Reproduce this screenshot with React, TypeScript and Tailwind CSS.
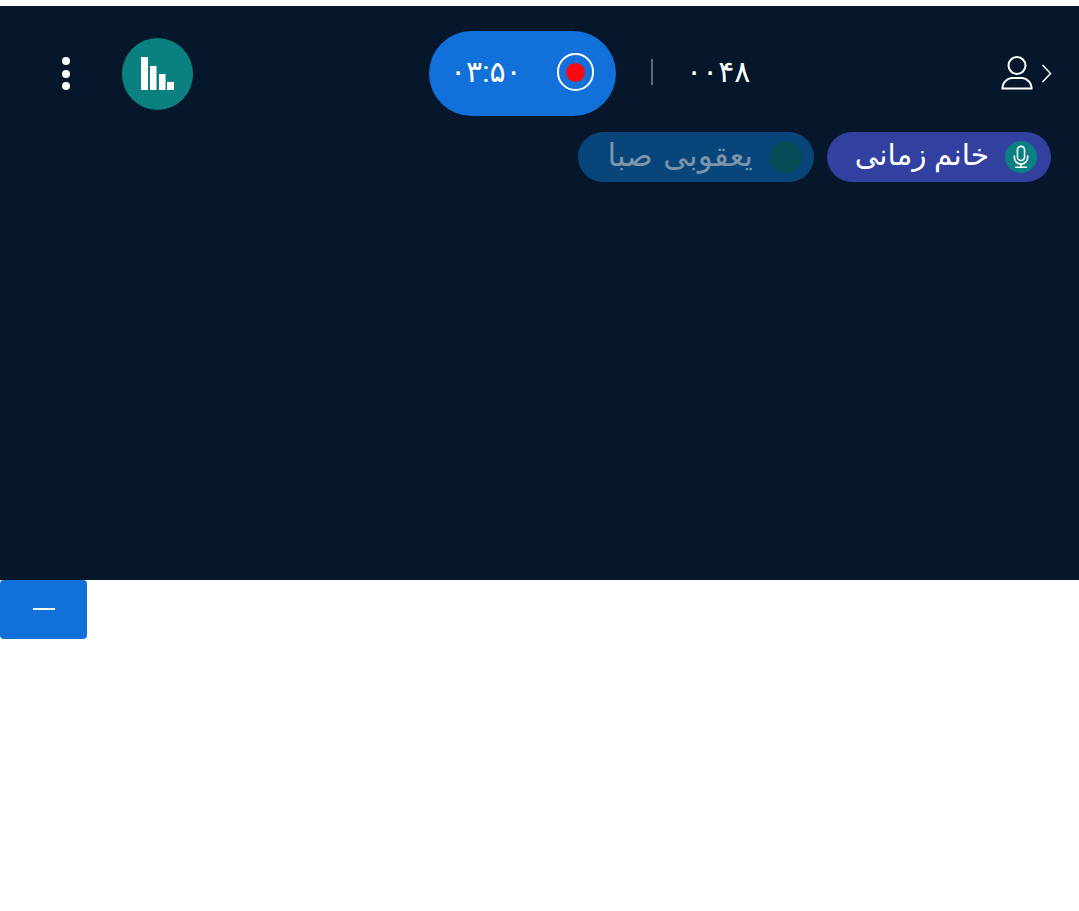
export default function App() {
  const font = "font-['Roboto','DejaVu_Sans',sans-serif]";
  return (
    <div className={`min-h-[911px] bg-white pt-[6px] ${font}`}>
      <div className="h-[574px] bg-[#06172b] pt-[25px]">
        <div className="flex h-[85px] items-center pl-[60px] pr-[27px]">
          <div className="flex w-[12px] flex-col items-center gap-[4.500px]">
            <span className="h-[8px] w-[8px] rounded-full bg-white" />
            <span className="h-[8px] w-[8px] rounded-full bg-white" />
            <span className="h-[8px] w-[8px] rounded-full bg-white" />
          </div>
          <div className="ml-[50px] flex h-[72px] w-[71px] items-center justify-center rounded-full bg-[#0b8080]">
            <svg width="34" height="33" viewBox="0 0 34 33" fill="#fff">
              <rect x="0" y="0" width="7" height="33" />
              <rect x="9" y="9" width="6.500" height="24" />
              <rect x="18" y="17" width="6.500" height="16" />
              <rect x="26" y="25" width="7" height="8" />
            </svg>
          </div>
          <div className="ml-[236px] flex h-[85px] w-[187px] items-center justify-between rounded-full bg-[#1270da] pl-[21px] pr-[22px]">
            <span className="mb-[4px] text-[30px] leading-none tracking-[5.500px] text-white">۰۳:۵۰</span>
            <span className="mb-[3px] flex h-[38px] w-[37px] items-center justify-center rounded-full border-2 border-white">
              <span className="h-[19px] w-[19px] rounded-full bg-[#f80a14]" />
            </span>
          </div>
          <div className="mb-[3px] ml-[35px] h-[26px] w-[2px] bg-[#5d6878]" />
          <span className="mb-[4px] ml-[33px] text-[30px] leading-none tracking-[4.500px] text-white">۰۰۴۸</span>
          <div className="ml-auto flex items-center gap-[8px]">
            <svg className="mb-[2px]" width="32" height="34" viewBox="0 0 32 34" fill="none" stroke="#fff" strokeWidth="2">
              <circle cx="16" cy="9.500" r="8.500" />
              <path d="M1.500 32.500v-1.500c0-4.500 5-8.500 9-9h11c4 .5 9 4.500 9 9v1.500z" />
            </svg>
            <svg width="11" height="19" viewBox="0 0 11 19" fill="none" stroke="#fff" strokeWidth="1.500">
              <path d="M1.500 1l8 8.500-8 8.500" />
            </svg>
          </div>
        </div>
        <div className="mt-[16px] flex justify-end gap-[13px] pr-[28px]">
          <div className="flex h-[50px] w-[236px] flex-row-reverse items-center rounded-full bg-[#07457a] pr-[12px]">
            <span className="h-[32px] w-[32px] shrink-0 rounded-full bg-[#064b56]" />
            <span className="mb-[3px] mr-[17px] text-[31px] leading-none whitespace-nowrap text-[#7e95a9] [word-spacing:3px]" dir="rtl">یعقوبی صبا</span>
          </div>
          <div className="flex h-[50px] w-[224px] flex-row-reverse items-center rounded-full bg-[#32409f] pr-[14px]">
            <span className="flex h-[32px] w-[32px] shrink-0 items-center justify-center rounded-full bg-[#0b8080]">
              <svg width="16" height="24" viewBox="0 0 18 26" fill="none" stroke="#fff" strokeWidth="1.800" strokeLinecap="round">
                <rect x="5" y="1" width="8" height="16" rx="4" />
                <path d="M1.500 12v1.500a7.500 7.500 0 0 0 15 0V12M9 21v3M3 24.500h12" />
              </svg>
            </span>
            <span className="mb-[3px] mr-[16px] text-[29.500px] leading-none whitespace-nowrap text-white" dir="rtl">خانم زمانی</span>
          </div>
        </div>
      </div>
      <button className="flex h-[59px] w-[87px] items-center justify-center rounded-[4px] bg-[#1270da]">
        <span className="mb-[2px] h-[2px] w-[22px] bg-white" />
      </button>
    </div>
  );
}
